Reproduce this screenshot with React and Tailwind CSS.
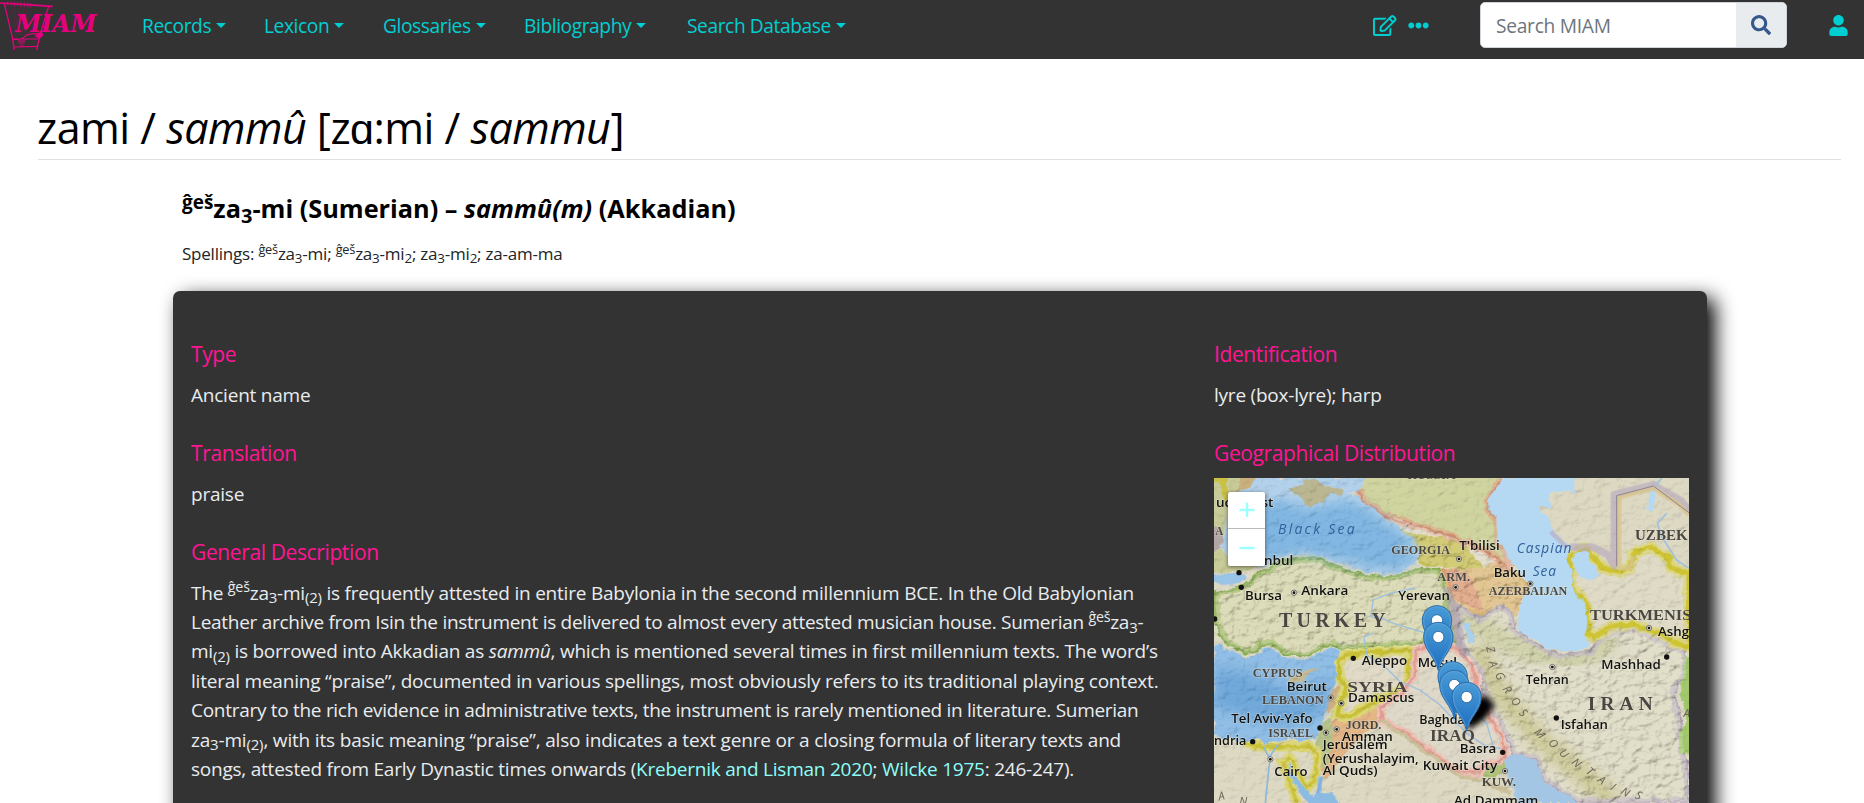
import React from "react";
import { FaRegEdit, FaEllipsisH, FaSearch, FaUser } from "react-icons/fa";

const Sup = ({ children }) => <sup className="text-[75%]">{children}</sup>;
const Sub = ({ children }) => <sub className="text-[79%]">{children}</sub>;

const NAV = [
  { label: "Records", box: "w-[122px]" },
  { label: "Lexicon", box: "w-[119px]" },
  { label: "Glossaries", box: "w-[141px]" },
  { label: "Bibliography", box: "w-[163px]" },
  { label: "Search Database", box: "w-[170px]" },
];

function Logo() {
  return (
    <svg className="block" width="100" height="56" viewBox="0 0 300 168" fill="none" stroke="#e6007e">
      <path d="M0 9 L66 13 L158 19" strokeWidth="5" />
      <path d="M13 10 L37 112 L43 150" strokeWidth="4" />
      <path d="M146 19 L120 104 L110 150" strokeWidth="4" />
      <path d="M36 117 Q62 122 74 110 T122 102 L116 112 M36 117 L116 117 M42 141 L112 139" strokeWidth="3.5" />
      <path d="M104 108 L124 92 L130 106 L118 116 Z" fill="#e6007e" strokeWidth="1" />
      <path d="M54 123 H76 M56 129 H74 M60 136 H70" strokeWidth="4" opacity="0.65" />
      <path d="M22 5 L46 100 M32 5 L52 102 M42 5 L56 104 M52 6 L60 104 M62 6 L64 104 M72 7 L68 104 M82 8 L74 104 M91 9 L80 102" strokeWidth="2" opacity="0.22" />
      <path d="M23 3 V18 M33 3 V18 M43 4 V20 M53 5 V20 M63 5 V22 M73 6 V22 M83 7 V23 M92 8 V24" strokeWidth="3" opacity="0.45" />
      <text x="46" y="97" textLength="243" lengthAdjust="spacingAndGlyphs" fill="#e6007e" stroke="none" fontSize="70" fontWeight="bold" fontStyle="italic" fontFamily="'DejaVu Serif', serif">MIAM</text>
    </svg>
  );
}

function NavBar() {
  return (
    <header className="flex h-[59px] bg-[#333333] text-[#00ced1]">
      <div className="w-[142px] shrink-0"><Logo /></div>
      <nav className="flex text-[19.2px] leading-[28px] tracking-[-0.42px] pt-[12px]">
        {NAV.map((n) => (
          <a key={n.label} className={n.box + " flex shrink-0 whitespace-nowrap"}>
            {n.label}
            <span className="ml-[5px] mt-[11px] h-0 w-0 border-x-[5px] border-t-[5.5px] border-x-transparent border-t-[#00ced1]" />
          </a>
        ))}
      </nav>
      <div className="ml-auto flex pr-[16px]">
        <FaRegEdit className="mt-[15px] h-[21px] w-[23.5px]" />
        <FaEllipsisH className="ml-[11.5px] mt-[15px] h-[21px] w-[21px]" />
        <div className="ml-[51px] mt-[2px] flex h-[46px] w-[307px] overflow-hidden rounded-[5px] border border-[#ced4da] bg-white">
          <span className="flex-1 pl-[15px] pt-[9px] text-[19.2px] leading-[28px] tracking-[-0.28px] text-[#6c757d]">Search MIAM</span>
          <span className="flex w-[50px] justify-center bg-[#e9ecef] pt-[12px] text-[#36598c]">
            <FaSearch className="h-[20px] w-[20px]" />
          </span>
        </div>
        <FaUser className="ml-[42px] mt-[15px] h-[21px] w-[19px]" />
      </div>
    </header>
  );
}

/* ---- map ---- */

const CITIES = [
  ["ucharest", 48, 140, 172], ["Istanbul", 120, 316, 160], ["Bursa", 135, 419, 111], ["Ankara", 304, 406, 141],
  ["Yerevan", 595, 419, 155], ["Aleppo", 485, 614, 137], ["Mosul", 653, 622, 118], ["Beirut", 260, 692, 121],
  ["Damascus", 444, 726, 199], ["Tel Aviv-Yafo", 94, 790, 244], ["ndria", 42, 856, 97], ["Amman", 426, 843, 152],
  ["Jerusalem", 368, 868, 195], ["(Yerushalayim,", 368, 908, 288], ["Al Quds)", 368, 945, 165], ["Cairo", 223, 948, 100],
  ["Baghdad", 658, 791, 160], ["Basra", 779, 879, 110], ["Kuwait City", 668, 930, 224], ["T'bilisi", 778, 271, 121],
  ["Baku", 881, 351, 97], ["Tehran", 977, 671, 129], ["Mashhad", 1204, 626, 178], ["Isfahan", 1082, 806, 142],
  ["Ashgabat", 1374, 529, 180], ["Ad Dammam", 762, 1036, 253],
];

const COUNTRIES = [
  ["TURKEY", 237, 500, 320, 60], ["GEORGIA", 574, 283, 176, 36], ["ARM.", 712, 362, 98, 35], ["CYPRUS", 158, 650, 150, 36],
  ["SYRIA", 442, 695, 180, 46], ["LEBANON", 186, 733, 185, 36], ["ISRAEL", 205, 830, 134, 35], ["JORD.", 437, 807, 107, 38],
  ["IRAQ", 690, 842, 135, 48], ["KUW.", 845, 978, 103, 37], ["IRAN", 1163, 749, 195, 58], ["AZERBAIJAN", 866, 405, 236, 37],
  ["TURKMENIS", 1170, 479, 304, 46], ["UZBEK", 1305, 240, 158, 46], ["A", 46, 224, 24, 36], ["RUSSIA", 622, 58, 145, 34],
];

const ZAGROS = [
  ["Z", 872, 568, 75], ["A", 880, 612, 72], ["G", 900, 648, 62], ["R", 922, 688, 55], ["O", 948, 725, 50], ["S", 970, 758, 45],
  ["M", 1020, 820, 48], ["O", 1060, 850, 48], ["U", 1092, 880, 45], ["N", 1130, 908, 42], ["T", 1170, 934, 40],
  ["A", 1206, 960, 36], ["I", 1240, 980, 34], ["N", 1276, 996, 30], ["S", 1316, 1006, 24],
];

const DOTS = [[117, 338], [124, 382], [460, 595], [360, 804], [158, 845], [908, 877], [1069, 774], [1400, 591], [44, 477]];
const CAPITALS = [[282, 398], [424, 730], [392, 713], [410, 808], [211, 898], [378, 818], [777, 297], [767, 382], [991, 371], [1057, 621], [1347, 504], [915, 933]];
const PINS = [[711, 437], [715, 487], [758, 605], [763, 631], [800, 667]];

const BLACK_SEA = "M165 54 L152 80 L128 92 L100 110 L88 140 L84 190 L70 230 L58 258 L80 285 L125 292 L160 312 L195 318 L240 292 L300 284 L345 282 L375 290 L400 306 L440 312 L480 330 L530 341 L590 338 L630 322 L655 300 L655 268 L640 238 L612 212 L575 188 L540 160 L500 128 L475 114 L450 98 L478 90 L490 75 L496 54 Z";
const MED = "M42 555 L60 555 L75 570 L100 572 L130 588 L160 592 L185 575 L182 562 L215 562 L245 588 L290 598 L330 598 L365 575 L400 560 L420 568 L412 595 L400 612 L410 645 L400 680 L385 725 L366 790 L345 838 L300 846 L262 836 L235 846 L200 852 L165 838 L120 846 L42 826 Z";
const CASPIAN = "M905 54 L895 76 L862 126 L868 150 L892 176 L896 245 L918 280 L940 310 L962 345 L992 366 L985 395 L962 425 L952 440 L952 500 L965 522 L1005 538 L1040 562 L1080 574 L1125 572 L1167 564 L1160 520 L1162 470 L1150 430 L1130 400 L1118 375 L1120 350 L1105 310 L1108 265 L1085 235 L1062 215 L1042 172 L1012 146 L1016 134 L1055 146 L1048 120 L1052 100 L1090 92 L1128 96 L1120 80 L1124 54 Z";
const KARA = "M1120 280 L1150 274 L1168 284 L1174 310 L1192 325 L1196 345 L1175 360 L1140 352 L1124 330 Z";
const GULF = "M912 900 L930 886 L960 884 L985 893 L1005 900 L1022 930 L1030 965 L1065 985 L1110 1012 L1130 1029 L952 1029 L938 985 L922 940 Z";
const TURKEY = "M42 395 L90 385 L130 375 L160 345 L200 325 L240 300 L345 288 L400 312 L480 338 L530 347 L600 343 L660 320 L720 330 L740 380 L750 430 L755 480 L770 545 L640 560 L520 562 L430 572 L400 556 L365 570 L330 592 L290 592 L245 582 L215 556 L182 558 L175 580 L130 580 L75 555 L42 490 Z";
const TURKMEN = "M1108 290 L1150 268 L1180 290 L1210 325 L1250 335 L1288 325 L1300 280 L1345 262 L1400 285 L1415 325 L1467 340 L1467 560 L1420 545 L1380 520 L1300 495 L1235 498 L1180 532 L1165 520 L1160 440 L1115 380 Z";
const IRAN = "M768 430 L840 475 L895 430 L940 455 L945 505 L1005 548 L1080 582 L1167 572 L1200 530 L1240 505 L1300 503 L1375 530 L1420 555 L1460 572 L1458 650 L1425 700 L1445 780 L1450 860 L1467 940 L1467 1029 L1130 1029 L1065 985 L1030 965 L1005 900 L935 885 L918 830 L870 760 L845 690 L838 640 L800 590 L775 540 Z";
const SYRIA = "M432 585 L520 575 L640 572 L628 612 L625 655 L600 690 L530 722 L445 772 L412 765 L425 715 L440 680 L415 650 L420 600 Z";
const IRAQ = "M645 570 L700 555 L765 560 L800 595 L825 640 L835 700 L870 770 L905 830 L915 885 L895 905 L850 915 L835 938 L780 935 L700 880 L620 820 L545 785 L538 745 L600 700 L640 655 Z";

function Pin({ x, y }) {
  return (
    <g transform={`translate(${x} ${y})`}>
      <path d="M0 145 C-10 102 -44 84 -44 44 C-44 18 -24 0 0 0 C24 0 44 18 44 44 C44 84 10 102 0 145 Z" fill="url(#pin)" stroke="#2a6da8" strokeWidth="3" />
      <path d="M-3 132 C-12 98 -40 80 -40 44 C-40 20 -22 4 0 4 C22 4 40 20 40 44 C40 80 12 98 3 132" fill="none" stroke="#62a5dc" strokeWidth="3" opacity="0.7" />
      <circle cx="0" cy="44" r="17" fill="#fff" stroke="#2c70ab" strokeWidth="3" />
    </g>
  );
}

function MapDrawing() {
  return (
    <svg className="block" width="475" height="325" viewBox="42 54 1425 975">
      <defs>
        <linearGradient id="pin" x1="0" y1="0" x2="0" y2="1">
          <stop offset="0" stopColor="#4a9cd6" />
          <stop offset="1" stopColor="#1c6cc0" />
        </linearGradient>
        <filter id="relief" x="0" y="0" width="100%" height="100%">
          <feTurbulence type="fractalNoise" baseFrequency="0.03 0.042" numOctaves="4" seed="7" result="n" />
          <feDiffuseLighting in="n" surfaceScale="16" diffuseConstant="1.22" lightingColor="#ffffff">
            <feDistantLight azimuth="225" elevation="55" />
          </feDiffuseLighting>
        </filter>
        <filter id="coast" x="-5%" y="-5%" width="110%" height="110%">
          <feTurbulence type="fractalNoise" baseFrequency="0.035" numOctaves="3" seed="3" />
          <feDisplacementMap in="SourceGraphic" scale="20" xChannelSelector="R" yChannelSelector="G" />
        </filter>
        <filter id="soft" x="-10%" y="-10%" width="120%" height="120%"><feGaussianBlur stdDeviation="18" /></filter>
        <filter id="haze" x="-30%" y="-30%" width="160%" height="160%"><feGaussianBlur stdDeviation="9" /></filter>
        <clipPath id="turkeyClip"><path d={TURKEY} /></clipPath>
        <clipPath id="iranClip"><path d={IRAN} /></clipPath>
        <clipPath id="seaClip"><path d={MED + BLACK_SEA} /></clipPath>
        <clipPath id="highlands">
          <path d={TURKEY} />
          <path d={IRAN} />
          <path d="M560 165 L640 190 L790 245 L900 300 L985 380 L945 470 L770 440 L740 330 L655 300 Z" />
        </clipPath>
      </defs>

      <rect x="42" y="54" width="1425" height="975" fill="#ddd9c3" />
      <g filter="url(#coast)">
        <path d="M20 30 H180 L130 90 L90 140 L70 230 L60 260 L80 290 L180 325 L20 345 Z" fill="#c9cc98" />
        <path d="M20 200 L60 200 L75 250 L20 300 Z" fill="#b5a9a6" />
        <path d="M120 30 H200 L150 85 L115 95 Z" fill="#c9b07c" />
        <path d="M490 30 L478 100 L560 165 L640 190 L720 215 L790 245 L870 285 L915 310 L895 240 L892 176 L860 130 L905 40 Z" fill="#d0d5a0" />
        <path d="M600 205 L660 225 L730 230 L790 250 L860 330 L840 330 L740 325 L660 315 L655 270 Z" fill="#c9c055" />
        <path d="M720 328 L850 325 L900 300 L985 366 L985 395 L955 430 L945 470 L900 430 L840 475 L770 430 L740 390 Z" fill="#dbb878" />
        <path d="M725 330 L800 335 L830 390 L850 455 L770 420 Z" fill="#dc9b76" />
        <path d="M405 770 L530 735 L545 790 L480 835 L435 880 L380 960 L358 930 Z" fill="#e4b585" />
        <path d="M366 790 L398 770 L398 850 L372 940 L345 850 Z" fill="#b8c48c" />
        <path d="M395 690 L430 672 L436 695 L390 755 L378 745 Z" fill="#ddb27c" />
        <path d="M855 915 L910 895 L925 935 L880 955 L835 940 Z" fill="#adc278" />
        <path d={TURKEY} fill="#d4d4a9" />
        <g clipPath="url(#turkeyClip)">
          <path d={TURKEY} fill="none" stroke="#8fb14f" strokeWidth="34" opacity="0.6" />
          <path d={TURKEY} fill="none" stroke="#79a23d" strokeWidth="16" opacity="0.8" />
        </g>
        <path d={IRAN} fill="#dad6bd" />
        <g clipPath="url(#iranClip)">
          <path d="M770 450 L900 540 L1000 580 L1130 600 L1240 540" fill="none" stroke="#c5c795" strokeWidth="60" filter="url(#soft)" />
          <path d="M830 560 L900 700 L1010 830 L1130 930 L1240 1020" fill="none" stroke="#c4bf84" strokeWidth="60" filter="url(#soft)" />
          <path d={IRAN} fill="none" stroke="#b8aabd" strokeWidth="32" opacity="0.6" />
          <path d={IRAN} fill="none" stroke="#9f90aa" strokeWidth="10" opacity="0.7" />
        </g>
        <path d={TURKMEN} fill="#dfdbc6" />
        <path d={TURKMEN} fill="none" stroke="#dcd676" strokeWidth="34" opacity="0.75" />
        <path d={TURKMEN} fill="none" stroke="#cfc532" strokeWidth="15" />
        <path d="M1455 585 L1480 600 V880 L1440 880 L1438 830 L1460 780 L1442 700 Z" fill="#a3c86c" />
        <path d={SYRIA} fill="#e0dac6" stroke="#dcd778" strokeWidth="32" />
        <path d={SYRIA} fill="none" stroke="#c9c136" strokeWidth="12" />
        <path d={IRAQ} fill="#ded9c8" stroke="#ecc3b6" strokeWidth="24" />
        <path d={IRAQ} fill="none" stroke="#e39f94" strokeWidth="8" />
        <path d="M545 785 L620 832 L700 892 L780 948 L850 962 L930 1000" fill="none" stroke="#cdc19c" strokeWidth="12" />
        <path d="M470 84 L485 115 L560 170 L640 195 L720 215 L790 245 L870 280 L930 330 M905 54 L862 126 L868 150 L892 176 L896 245 L940 320" fill="none" stroke="#e39d82" strokeWidth="24" opacity="0.55" />
        <path d="M480 54 L470 84 L485 115 L560 170 L640 195 L720 215 L790 245 L870 280 L930 330 M905 54 L862 126 L868 150 L892 176" fill="none" stroke="#c97c60" strokeWidth="7" opacity="0.7" />
        <path d="M130 848 L200 862 L330 858 L352 880 L345 960 L320 985 L270 890 L245 905 L290 1029" fill="none" stroke="#ddd679" strokeWidth="28" />
        <path d="M130 848 L200 862 L330 858 L352 880 L345 960 L320 985 L270 890 L250 905 L290 1029" fill="none" stroke="#cdc43c" strokeWidth="10" />
        <path d="M740 380 L760 440 L775 540 L800 590" fill="none" stroke="#a596a6" strokeWidth="26" opacity="0.65" />
        <path d="M42 54 L70 54 L75 100 L90 140" fill="none" stroke="#cbc244" strokeWidth="18" />
      </g>
      <rect x="42" y="54" width="1425" height="975" filter="url(#relief)" className="mix-blend-multiply" opacity="0.14" />
      <g clipPath="url(#highlands)">
        <rect x="42" y="54" width="1425" height="975" filter="url(#relief)" className="mix-blend-multiply" opacity="0.2" />
      </g>

      <g filter="url(#coast)">
        <path d={BLACK_SEA} fill="#a9cbe7" />
        <path d="M130 140 L250 120 L330 148 L430 120 L500 145 L580 205 L640 250 L640 300 L590 330 L500 320 L400 295 L300 275 L200 300 L110 270 L95 200 Z" fill="#6fadde" filter="url(#soft)" />
        <path d="M20 350 L90 338 L130 344 L135 362 L90 374 L20 366 Z" fill="#9ac3e8" />
        <path d={MED} fill="#82b6e3" />
        <path d="M42 620 L150 640 L300 700 L390 640 L370 760 L240 800 L42 740 Z" fill="#5f9ed6" filter="url(#soft)" />
        <path d={CASPIAN} fill="#b5d9f3" />
        <path d={KARA} fill="#b5d9f3" />
        <path d={GULF} fill="#a3c6e5" />
        <path d="M262 905 L285 950 L325 1000 L345 1012 L355 975 L360 940 L366 960 L362 1000 L400 1000 L425 1040 H340 L300 1000 L268 945 Z" fill="#8bbbe2" />
        <path d="M265 82 L300 78 L310 60 L345 56 L375 80 L432 88 L432 104 L388 104 L370 122 L322 142 L304 116 Z" fill="#b2ae83" />
        <path d="M262 655 L290 642 L356 622 L322 652 L300 665 L268 668 Z" fill="#c0b287" />
        <path d="M790 488 L808 490 L822 530 L822 550 L804 548 Z" fill="#a9d0ee" />
        <path d="M1352 80 L1365 85 L1362 145 L1342 148 L1345 110 Z" fill="#b5d9f3" />
      </g>
      <g clipPath="url(#seaClip)">
        <rect x="42" y="54" width="640" height="800" filter="url(#relief)" className="mix-blend-multiply" opacity="0.12" />
      </g>

      <g fill="none" strokeLinejoin="round">
        <path d="M1110 262 L1180 262 L1225 285 L1243 318 L1243 103 L1360 75 L1440 120 L1480 165" stroke="#b9a9bd" strokeWidth="22" opacity="0.65" />
        <path d="M1052 215 L1100 262" stroke="#b9a9bd" strokeWidth="14" opacity="0.6" />
        <path d="M1300 288 L1288 325 L1257 325 L1257 112 L1360 84 L1435 132 L1467 165" stroke="#d8c58e" strokeWidth="14" opacity="0.8" />
        <path d="M1250 318 V107 L1360 78 L1467 158" stroke="#8d8495" strokeWidth="3" />
        <path d="M190 860 L210 898 L205 940 L196 1029 M232 856 L208 892" stroke="#8db8dd" strokeWidth="5" />
        <path d="M645 384 L570 400 L520 420 L512 470 L545 480 M512 460 L580 490 L680 520 M520 520 L492 530 L500 585 L560 625 L600 665 L660 690 L720 735 L800 820 L860 860 L905 865" stroke="#9dbfdf" strokeWidth="4" />
        <path d="M720 620 L760 700 L860 790 L880 860" stroke="#9dbfdf" strokeWidth="4" />
        <path d="M1365 80 L1385 54 M1400 160 L1372 190 L1385 230 L1430 300 L1467 325" stroke="#9fc2dc" strokeWidth="5" />
        <path d="M366 950 L352 1000" stroke="#7fb2df" strokeWidth="8" />
      </g>

      <g fill="#111">
        {DOTS.map(([x, y]) => <circle key={x} cx={x} cy={y} r="8" />)}
        {CAPITALS.map(([x, y]) => (
          <g key={x}>
            <circle cx={x} cy={y} r="8" fill="#ddd8c4" stroke="#666" strokeWidth="2.5" />
            <circle cx={x} cy={y} r="4" />
          </g>
        ))}
      </g>
      <g fill="#4a4742" stroke="#e8e4d2" strokeOpacity="0.4" strokeWidth="4" paintOrder="stroke" fontFamily="'Liberation Serif', serif" fontWeight="bold">
        {COUNTRIES.map(([t, x, y, w, s]) => (
          <text key={t} x={x} y={y} textLength={w} fontSize={s} lengthAdjust={s > 50 ? "spacing" : "spacingAndGlyphs"}>{t}</text>
        ))}
      </g>
      <g fill="#6b6557" fontFamily="'Open Sans', sans-serif" fontSize="34" fontStyle="italic" textAnchor="middle">
        {ZAGROS.map(([t, x, y, r]) => (
          <text key={x} transform={`translate(${x} ${y}) rotate(${r})`} y="12">{t}</text>
        ))}
        <text x="64" y="1020" transform="rotate(-12 64 1010)">A</text>
        <text x="130" y="1036">N</text>
        <text x="1460" y="772">A</text>
      </g>
      <g fill="#31619b" fontFamily="'Open Sans', sans-serif" fontStyle="italic" fontWeight="500">
        <text x="234" y="223" fontSize="42" textLength="230">Black Sea</text>
        <text x="950" y="278" fontSize="41" textLength="164">Caspian</text>
        <text x="998" y="348" fontSize="41" textLength="70">Sea</text>
      </g>
      <g fill="#111" stroke="#f2efe2" strokeOpacity="0.4" strokeWidth="4" paintOrder="stroke" fontFamily="'Open Sans', sans-serif" fontSize="40" fontWeight="600">
        {CITIES.map(([t, x, y, w]) => (
          <text key={t} x={x} y={y} textLength={w} lengthAdjust="spacingAndGlyphs">{t}</text>
        ))}
      </g>

      <path d="M800 808 L815 735 L845 705 L868 715 L885 738 L850 780 Z" fill="#000" filter="url(#haze)" />
      <path d="M802 808 L820 730 L848 725 L855 755 Z" fill="#000" filter="url(#haze)" />
      {PINS.map(([x, y]) => <Pin key={x} x={x} y={y} />)}
    </svg>
  );
}

function DistributionMap() {
  return (
    <div className="relative mt-[10px] h-[400px] w-[475px] overflow-hidden bg-[#ddd9c3]">
      <MapDrawing />
      <div className="absolute left-[14px] top-[14px] w-[37px] overflow-hidden rounded-[2px] bg-white shadow-[0_1px_4px_rgba(0,0,0,0.55)]">
        <div className="flex h-[37px] items-center justify-center border-b border-[#bbbbbb]">
          <svg width="16" height="16" stroke="#9fffff" strokeWidth="2.4"><path d="M0.5 8 H15.5 M8 0.5 V15" /></svg>
        </div>
        <div className="flex h-[37px] items-center justify-center">
          <svg width="16" height="16" stroke="#9fffff" strokeWidth="2.4"><path d="M0.5 8 H15.5" /></svg>
        </div>
      </div>
    </div>
  );
}

/* ---- record ---- */

const Heading = ({ children }) => (
  <h3 className="whitespace-nowrap text-[21px] leading-[30px] tracking-[-0.38px] text-[#ff1493]">{children}</h3>
);
const Value = ({ children }) => (
  <p className="mb-[28px] mt-[12px] text-[19px] leading-[29px] tracking-[-0.22px]">{children}</p>
);
const Cite = ({ children }) => <a className="text-[#8cfffa]">{children}</a>;

function Description() {
  return (
    <p className="mt-[11.5px] whitespace-nowrap text-[19px] leading-[29.4px]">
      <span className="block tracking-[-0.22px]">The <Sup>ĝeš</Sup>za<Sub>3</Sub>-mi<Sub>(2)</Sub> is frequently attested in entire Babylonia in the second millennium BCE. In the Old Babylonian</span>
      <span className="block tracking-[-0.28px]">Leather archive from Isin the instrument is delivered to almost every attested musician house. Sumerian <Sup>ĝeš</Sup>za<Sub>3</Sub>-</span>
      <span className="block tracking-[-0.23px]">mi<Sub>(2)</Sub> is borrowed into Akkadian as <i>sammû</i>, which is mentioned several times in first millennium texts. The word’s</span>
      <span className="block tracking-[-0.2px]">literal meaning “praise”, documented in various spellings, most obviously refers to its traditional playing context.</span>
      <span className="block tracking-[-0.29px]">Contrary to the rich evidence in administrative texts, the instrument is rarely mentioned in literature. Sumerian</span>
      <span className="block tracking-[-0.18px]">za<Sub>3</Sub>-mi<Sub>(2)</Sub>, with its basic meaning “praise”, also indicates a text genre or a closing formula of literary texts and</span>
      <span className="block tracking-[-0.23px]">songs, attested from Early Dynastic times onwards (<Cite>Krebernik and Lisman 2020</Cite>; <Cite>Wilcke 1975</Cite>: 246-247).</span>
    </p>
  );
}

export default function App() {
  return (
    <div className="h-screen overflow-hidden bg-white font-['Open_Sans',sans-serif] text-black">
      <NavBar />
      <h1 className="ml-[38px] mr-[23px] mt-[40px] whitespace-nowrap border-b border-[#e0e0e0] pb-[2px] text-[43px] leading-[58px] tracking-[-0.52px]">
        <span className="-ml-px">zami / </span><i>sammû</i> [zɑ:mi / <i>sammu</i>]
      </h1>
      <section className="ml-[173px] w-[1534px]">
        <div className="whitespace-nowrap pl-[9px]">
          <h2 className="mt-[30px] text-[25.3px] font-bold leading-[36px] tracking-[0px]">
            <Sup>ĝeš</Sup>za<Sub>3</Sub>-mi (Sumerian) – <i>sammû(m)</i> (Akkadian)
          </h2>
          <p className="mt-[15px] text-[17px] leading-[25px] tracking-[-0.22px] text-[#212529]">
            Spellings: <Sup>ĝeš</Sup>za<Sub>3</Sub>-mi; <Sup>ĝeš</Sup>za<Sub>3</Sub>-mi<Sub>2</Sub>; za<Sub>3</Sub>-mi<Sub>2</Sub>; za-am-ma
          </p>
        </div>
        <div className="mt-[25px] flex h-[640px] rounded-[7px] bg-[#333333] pl-[18px] pt-[48px] text-[#e9ecef] shadow-[8px_7px_20px_#000]">
          <div className="w-[1023px] shrink-0">
            <Heading>Type</Heading>
            <Value>Ancient name</Value>
            <Heading>Translation</Heading>
            <Value>praise</Value>
            <Heading>General Description</Heading>
            <Description />
          </div>
          <div>
            <Heading>Identification</Heading>
            <Value>lyre (box-lyre); harp</Value>
            <Heading>Geographical Distribution</Heading>
            <DistributionMap />
          </div>
        </div>
      </section>
    </div>
  );
}
